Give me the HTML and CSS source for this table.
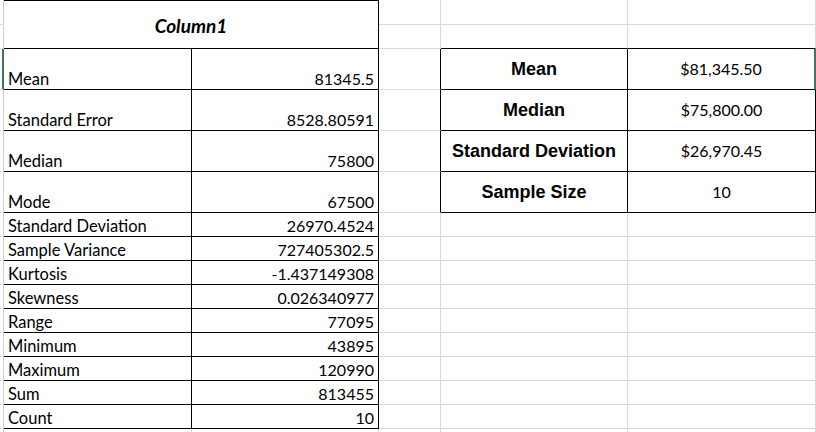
FILE: index.html
```html
<!DOCTYPE html>
<html>
<head>
<meta charset="utf-8">
<link rel="stylesheet" href="styles.css">
</head>
<body>
<div class="sheet">
  <div class="c edge"></div>
  <div class="hdr">Column1</div>
  <div class="c"></div><div class="c"></div><div class="c"></div>

  <div class="c edge"></div>
  <div class="c"></div><div class="c bb"></div><div class="c bb"></div>

  <div class="c edge sel"></div>
  <div class="c lab blk">Mean</div><div class="c val blk">81345.5</div>
  <div class="c br"></div>
  <div class="c key blk">Mean</div><div class="c num blk selr">$81,345.50</div>

  <div class="c edge"></div>
  <div class="c lab blk">Standard Error</div><div class="c val blk">8528.80591</div>
  <div class="c br"></div>
  <div class="c key blk">Median</div><div class="c num blk">$75,800.00</div>

  <div class="c edge"></div>
  <div class="c lab blk">Median</div><div class="c val blk">75800</div>
  <div class="c br"></div>
  <div class="c key blk">Standard Deviation</div><div class="c num blk">$26,970.45</div>

  <div class="c edge"></div>
  <div class="c lab blk">Mode</div><div class="c val blk">67500</div>
  <div class="c br"></div>
  <div class="c key blk">Sample Size</div><div class="c num blk">10</div>

  <div class="c edge"></div>
  <div class="c lab blk">Standard Deviation</div><div class="c val blk">26970.4524</div>
  <div class="c"></div><div class="c"></div><div class="c"></div>

  <div class="c edge"></div>
  <div class="c lab blk">Sample Variance</div><div class="c val blk">727405302.5</div>
  <div class="c"></div><div class="c"></div><div class="c"></div>

  <div class="c edge"></div>
  <div class="c lab blk">Kurtosis</div><div class="c val blk">-1.437149308</div>
  <div class="c"></div><div class="c"></div><div class="c"></div>

  <div class="c edge"></div>
  <div class="c lab blk">Skewness</div><div class="c val blk">0.026340977</div>
  <div class="c"></div><div class="c"></div><div class="c"></div>

  <div class="c edge"></div>
  <div class="c lab blk">Range</div><div class="c val blk">77095</div>
  <div class="c"></div><div class="c"></div><div class="c"></div>

  <div class="c edge"></div>
  <div class="c lab blk">Minimum</div><div class="c val blk">43895</div>
  <div class="c"></div><div class="c"></div><div class="c"></div>

  <div class="c edge"></div>
  <div class="c lab blk">Maximum</div><div class="c val blk">120990</div>
  <div class="c"></div><div class="c"></div><div class="c"></div>

  <div class="c edge"></div>
  <div class="c lab blk">Sum</div><div class="c val blk">813455</div>
  <div class="c"></div><div class="c"></div><div class="c"></div>

  <div class="c edge"></div>
  <div class="c lab blk">Count</div><div class="c val blk">10</div>
  <div class="c"></div><div class="c"></div><div class="c"></div>

  <div class="c edge"></div>
  <div class="c"></div><div class="c"></div>
  <div class="c"></div><div class="c"></div><div class="c"></div>
</div>
</body>
</html>
```
FILE: styles.css
```css
html, body {
  margin: 0;
  padding: 0;
  background: #ffffff;
  overflow: hidden;
}
body {
  font-family: Lato, "Open Sans", sans-serif;
  font-size: 16px;
  color: #000000;
}
.sheet {
  display: grid;
  grid-template-columns: 4px 188px 187px 62px 187px 188px;
  grid-template-rows: 25px 24px 41px 41px 41px 41px repeat(9, 24px) 24px;
  width: 816px;
}
.c {
  box-sizing: border-box;
  border-right: 1px solid #dadada;
  border-bottom: 1px solid #dadada;
  min-width: 0;
  white-space: nowrap;
  overflow: hidden;
}
.edge {
  border-right-color: #d0d0d0;
}
.sel {
  border-right: 2px solid #3e7758;
}
.selr {
  border-right: 2px solid #3e7758 !important;
}
.bb {
  border-bottom-color: #000000;
}
.br {
  border-right-color: #000000;
}
.blk {
  border-right-color: #000000;
  border-bottom-color: #000000;
}
.hdr {
  grid-column: 2 / 4;
  grid-row: 1 / 3;
  box-sizing: border-box;
  border-top: 1px solid #000000;
  border-right: 1px solid #000000;
  border-bottom: 1px solid #000000;
  display: flex;
  align-items: center;
  justify-content: center;
  font-weight: 700;
  font-style: italic;
  font-size: 19px;
  padding-top: 1px;
}
.lab, .val {
  display: flex;
  align-items: flex-end;
  line-height: 20px;
  padding: 0 4px 0 4px;
}
.lab {
  font-size: 16.5px;
}
.val {
  justify-content: flex-end;
}
.key, .num {
  display: flex;
  align-items: center;
  justify-content: center;
  line-height: 20px;
}
.key {
  font-family: "Liberation Sans", Arial, sans-serif;
  font-weight: 700;
  font-size: 18px;
}
```
